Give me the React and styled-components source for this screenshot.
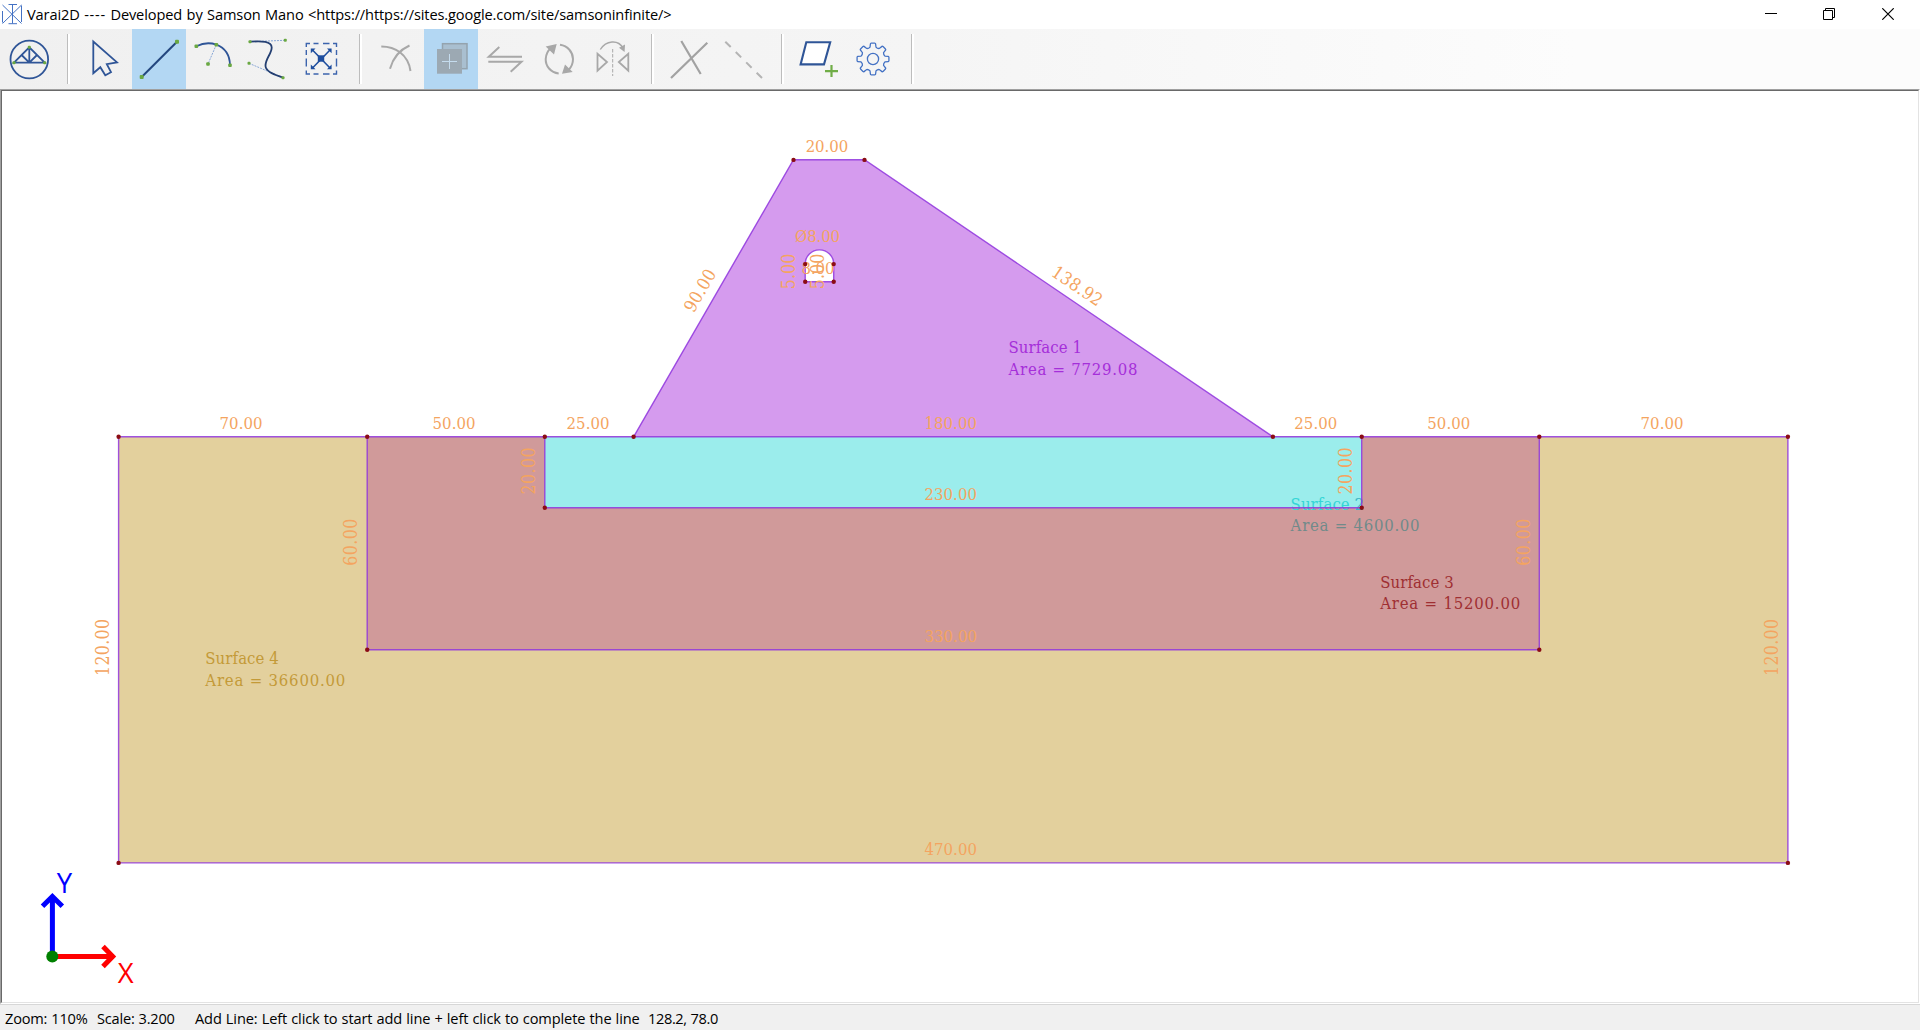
import React from "react";
import styled, { createGlobalStyle } from "styled-components";

const UI_FONT = '"Open Sans", "Noto Sans", sans-serif';
const DRAWING_FONT = '"DejaVu Serif Condensed", "DejaVu Serif", serif';

const GlobalStyle = createGlobalStyle`
  html, body { margin: 0; padding: 0; height: 100%; overflow: hidden; }
  * { box-sizing: border-box; }
`;

const Window = styled.div`
  display: flex;
  flex-direction: column;
  width: 100%;
  height: 100vh;
  background: #ffffff;
  color: #000000;
  font-family: ${UI_FONT};
  font-size: 14.6px;
`;

const TitleBar = styled.header`
  display: flex;
  align-items: center;
  flex: 0 0 29px;
  height: 29px;
  background: #ffffff;
`;

const Title = styled.h1`
  flex: 1;
  margin: 0 0 1px 5px;
  font-size: 14.6px;
  font-weight: 400;
  line-height: 28px;
  letter-spacing: -0.12px;
  word-spacing: 0.8px;
  white-space: pre;
`;

const Dashes = styled.span`
  letter-spacing: 0.75px;
`;

const AppIcon = styled.svg`
  width: 20px;
  height: 22px;
  margin-left: 2px;
`;

const WindowButton = styled.button`
  display: flex;
  align-items: center;
  justify-content: center;
  width: 58.5px;
  height: 29px;
  padding: 0 0 1px;
  border: 0;
  background: transparent;
`;

const WindowControls = styled.div`
  display: flex;
  width: 178.5px;
`;

const Toolbar = styled.nav`
  display: flex;
  align-items: stretch;
  flex: 0 0 60px;
  height: 60px;
  padding-left: 2px;
  background: linear-gradient(90deg, #f0f0f0 0, #f5f5f5 48%, #fcfcfc 82%, #fcfcfc 100%);
`;

const ToolButton = styled.button`
  flex: 0 0 54px;
  height: 60px;
  padding: 0;
  border: 0;
  background: ${(p) => (p.$active ? "#b3d7f3" : "transparent")};
`;

const ToolIcon = styled.svg`
  display: block;
  width: 54px;
  height: 60px;
  fill: none;
  stroke: ${(p) => (p.$muted ? "#a8a8a8" : "#2f5597")};
  stroke-width: 1.8;
`;

const Separator = styled.div`
  flex: 0 0 22px;
  padding: 5px 0 5px 11px;
  &::before {
    content: "";
    display: block;
    width: 2px;
    height: 50px;
    border-left: 1px solid #bdbdbd;
    background: #ffffff;
  }
`;

const Viewport = styled.main`
  flex: 1;
  min-height: 0;
  border-style: solid;
  border-width: 1px;
  border-color: #a0a0a0 #ffffff #ffffff #a0a0a0;
`;

const ViewportInner = styled.div`
  height: 100%;
  border-style: solid;
  border-width: 1px;
  border-color: #696969 #e3e3e3 #e3e3e3 #696969;
  background: #ffffff;
`;

const Drawing = styled.svg`
  display: block;
  width: 1916px;
  height: 911px;
`;

const Dimension = styled.text`
  font-family: ${DRAWING_FONT};
  font-size: ${(p) => (p.$turned ? 17.6 : 16.6)}px;
  fill: #f4a460;
  text-anchor: middle;
`;

const SurfaceLabel = styled.text`
  font-family: ${DRAWING_FONT};
  font-size: 16.6px;
  fill: ${(p) => p.$tone};
`;

const AxisName = styled.text`
  font-family: ${UI_FONT};
  font-size: 27.5px;
  text-anchor: middle;
  fill: ${(p) => p.$tone};
`;

const StatusBar = styled.footer`
  display: flex;
  align-items: center;
  flex: 0 0 26px;
  height: 26px;
  padding-left: 5px;
  border-top: 1px solid #d7d7d7;
  background: #f0f0f0;
`;

const StatusItem = styled.span`
  flex: 0 0 ${(p) => p.$width}px;
  line-height: 24px;
  padding-top: 1px;
  letter-spacing: ${(p) => p.$track}px;
  word-spacing: 0.45px;
  white-space: pre;
`;

const GREEN = "#70ad47";

const Node = ({ x, y, s = 3.6 }) => (
  <rect x={x - s / 2} y={y - s / 2} width={s} height={s} rx="1" fill="#6aa842" stroke="none" />
);

function gearPath(cx, cy) {
  const at = (r, deg) => {
    const a = (deg * Math.PI) / 180;
    return `${(cx + r * Math.cos(a)).toFixed(2)} ${(cy + r * Math.sin(a)).toFixed(2)}`;
  };
  let d = "";
  for (let i = 0; i < 8; i++) {
    const c = i * 45 - 90;
    d += `${i ? "L" : "M"}${at(12.3, c - 14)} L${at(15.5, c - 9.5)} Q${at(16, c - 9)} ${at(16, c - 6)} L${at(16, c + 6)} Q${at(16, c + 9)} ${at(15.5, c + 9.5)} L${at(12.3, c + 14)} Q${at(11.2, c + 22.5)} ${at(12.3, c + 31)} `;
  }
  return d + "Z";
}

const icons = {
  truss: (
    <>
      <circle cx="27.3" cy="30.5" r="18.8" />
      <path d="M12 33.7H42.7L27.3 18.3ZM27.3 18.3V33.7M27.3 33.7L19.6 26M27.3 33.7L35 26" />
      <Node x={27.3} y={18.3} s={3} />
      <Node x={12} y={33.7} s={3} />
      <Node x={42.7} y={33.7} s={3} />
    </>
  ),
  select: <path d="M15.3 12.6V44.2L22.3 38.2L27.3 46.2L33 43.2L28.8 35.2L39 33.4Z" />,
  line: (
    <>
      <path d="M9.7 48L45 12.7" stroke="#24477f" strokeWidth="2" />
      <Node x={9.7} y={48} s={4} />
      <Node x={45} y={12.7} s={4} />
    </>
  ),
  arc: (
    <>
      <path d="M30.3 15.7L22 35" strokeWidth="0.8" strokeDasharray="2 1" stroke="#6f94cf" />
      <path d="M10.3 17.3C17 14 24 13.4 30.3 15.7C39 19 43.8 26.5 44 36.3" />
      <Node x={10.3} y={17.3} />
      <Node x={30.3} y={15.7} />
      <Node x={44} y={36.3} />
      <Node x={22} y={35} />
    </>
  ),
  spline: (
    <>
      <path d="M10 12.7L45.3 11.3M9 34.3L43 48.7" strokeWidth="0.8" strokeDasharray="2 1" stroke="#6f94cf" />
      <path d="M10 12.7C22 12 31.5 12 31.7 18.5C31.8 25 25.5 29 25.5 37C26 43 35 45.5 43 48.7" stroke="#243f72" />
      <Node x={10} y={12.7} s={3} />
      <Node x={45.3} y={11.3} s={3} />
      <Node x={9} y={34.3} s={3} />
      <Node x={43} y={48.7} s={3} />
    </>
  ),
  fit: (
    <>
      <path
        d="M12.3 18V14.5H16M39 14.5H42.5V18M42.5 41.5V45H39M16 45H12.3V41.5M19.5 14.5H24.5M29 14.5H35.5M19.5 45H24.5M29 45H35.5M12.3 21V26M12.3 29.5V37.5M42.5 21V26M42.5 29.5V37.5"
        stroke="#3c64ad" strokeWidth="1.4"
      />
      <path d="M18 20.5L36.5 39.5M36.5 20.5L18 39.5" stroke="#1f4e9e" strokeWidth="1.6" />
      <rect x="23.8" y="26.3" width="6.4" height="6.4" fill="#1f4e9e" stroke="none" />
      <path
        d="M16.8 19.5H21.5L16.8 24.2ZM37.6 19.5H33L37.6 24.2ZM16.8 40.2H21.5L16.8 35.5ZM37.6 40.2H33L37.6 35.5Z"
        fill="#1f4e9e" stroke="none"
      />
    </>
  ),
  trim: (
    <path d="M11.3 17.5C18 17.5 24.5 19 30 23.3C36 28 39.5 34.5 40.5 42M39.5 16.5C29.5 21 23 29 20 39.7" strokeWidth="2" />
  ),
  copy: (
    <>
      <rect x="18.5" y="14.7" width="24.5" height="25" fill="#a9bfd0" stroke="#94a3ae" strokeWidth="1.5" />
      <rect x="13" y="20" width="25" height="24.7" fill="#9ca9b3" stroke="none" />
      <path d="M18 32.5H33M25.5 25V40" stroke="#c5dcee" strokeWidth="1" />
    </>
  ),
  swap: <path d="M21.3 18L10.8 27.7H44M10.3 32.7H43.5L32.7 42.8" strokeWidth="2" />,
  rotate: (
    <>
      <path d="M26.7 44.5C18.5 43.5 13.5 37 13.7 30C14 24.5 16 21.5 19 19M28 15.8C36 17 40.8 23 41 30C41 35 39.5 38 36.5 41" strokeWidth="2" />
      <path d="M13.7 17.5L24.7 15L22 25.5ZM30 44.7L40.7 43L33 35.5Z" fill="#a8a8a8" stroke="none" />
    </>
  ),
  mirror: (
    <>
      <path d="M11.5 24.8V41.6L21 33ZM42.3 24.8V41.6L32.8 33Z" />
      <path d="M26.7 20V47" strokeWidth="1" strokeDasharray="3.5 1.5" />
      <path d="M14.3 20.5C20 11.5 32 10 37 19" strokeWidth="1.4" />
      <path d="M33 18.8L39 15.5L38.6 23Z" fill="#a8a8a8" stroke="none" />
    </>
  ),
  intersect: <path d="M19.3 12L38.7 45M45.3 13.7L9 49" strokeWidth="2.2" stroke="#a2a2a2" />,
  dashed: <path d="M9.3 12.7L46 49" strokeWidth="2" strokeDasharray="7.6 7.1" stroke="#b4b4b4" />,
  surface: (
    <>
      <path d="M14.3 13.3H38.2L32 35.4H8.6Z" fill="#ffffff" strokeWidth="2.1" />
      <path d="M33 42.2H46M39.5 36V48" stroke={GREEN} strokeWidth="2.2" />
    </>
  ),
  settings: (
    <>
      <path d={gearPath(27, 30)} stroke="#4472c4" strokeWidth="1.3" />
      <circle cx="27" cy="30" r="5.6" stroke="#4472c4" strokeWidth="1.3" />
    </>
  ),
};

const toolGroups = [
  [["truss", "Model"]],
  [["select", "Select"], ["line", "Add line", { active: true }], ["arc", "Add arc"], ["spline", "Add spline"], ["fit", "Zoom to fit"]],
  [
    ["trim", "Trim", { muted: true }],
    ["copy", "Copy", { muted: true, active: true }],
    ["swap", "Move", { muted: true }],
    ["rotate", "Rotate", { muted: true }],
    ["mirror", "Mirror", { muted: true }],
  ],
  [["intersect", "Intersect", { muted: true }], ["dashed", "Split", { muted: true }]],
  [["surface", "Add surface"], ["settings", "Settings"]],
];

const X = [118.6, 367.2, 544.8, 633.6, 1272.9, 1361.7, 1539.3, 1787.9];
const GROUND = 436.8;
const Y20 = 507.8;
const Y60 = 649.8;
const Y120 = 862.9;

const nodes = [
  ...X.map((x) => [x, GROUND]),
  [X[2], Y20], [X[5], Y20], [X[1], Y60], [X[6], Y60], [X[0], Y120], [X[7], Y120],
  [793.5, 159.9], [864.5, 159.9],
  [805.2, 264.1], [833.7, 264.1], [805.2, 281.8], [833.7, 281.8],
];

const edges = [
  `M${X[0]} ${GROUND}H${X[7]}V${Y120}H${X[0]}Z`,
  `M${X[1]} ${GROUND}V${Y60}H${X[6]}V${GROUND}`,
  `M${X[2]} ${GROUND}V${Y20}H${X[5]}V${GROUND}`,
  `M${X[3]} ${GROUND}L793.5 159.7H864.5L${X[4]} ${GROUND}`,
  "M805.2 264.1V281.8H833.7V264.1A14.25 14.25 0 0 0 805.2 264.1",
];

const dimensions = [
  ["20.00", 826.9, 152, 0, 42.5],
  ["70.00", 241, 429, 0, 43],
  ["50.00", 454, 429, 0, 43],
  ["25.00", 588, 429, 0, 43],
  ["180.00", 950.7, 429, 0, 52.5],
  ["25.00", 1315.8, 429, 0, 43],
  ["50.00", 1448.8, 429, 0, 43],
  ["70.00", 1662, 429, 0, 43],
  ["230.00", 950.7, 500, 0, 52.5],
  ["330.00", 950.7, 642, 0, 52.5],
  ["470.00", 950.7, 855, 0, 52.5],
  ["Ø8.00", 817.6, 242, 0, 45],
  ["8.00", 818, 274, 0, 33],
  ["5.00", 795, 271.5, -90, 35.5],
  ["5.00", 823.7, 271.5, -90, 35.5],
  ["20.00", 535, 471, -90, 47],
  ["20.00", 1352, 471, -90, 47],
  ["60.00", 357.3, 542.2, -90, 47],
  ["60.00", 1530, 542.2, -90, 47],
  ["120.00", 108.5, 647.5, -90, 57],
  ["120.00", 1778, 647.5, -90, 57],
  ["90.00", 705.2, 293.5, -60, 46],
  ["138.92", 1073.8, 291, 34, 57],
];

const surfaces = [
  ["Surface 1", "Area = 7729.08", 1008.5, 353.3, 375, 129, "#a52fd9", "#a52fd9"],
  ["Surface 2", "Area = 4600.00", 1290.6, 510, 531, 129, "#35d6d6", "#718a8a", "#3cb6c4"],
  ["Surface 3", "Area = 15200.00", 1380.2, 588, 609, 140, "#9f2f32", "#9f2f32"],
  ["Surface 4", "Area = 36600.00", 205.3, 664, 686, 140, "#c39a38", "#c39a38"],
];

function Model() {
  return (
    <Drawing viewBox="2 91 1916 911">
      <path d={`M${X[0]} ${GROUND}H${X[7]}V${Y120}H${X[0]}Z`} fill="#e3d09d" />
      <path d={`M${X[1]} ${GROUND}H${X[6]}V${Y60}H${X[1]}Z`} fill="#d09a9a" />
      <path d={`M${X[2]} ${GROUND}H${X[5]}V${Y20}H${X[2]}Z`} fill="#9bedec" />
      <path
        d={`M${X[3]} ${GROUND}L793.5 159.7H864.5L${X[4]} ${GROUND}ZM805.2 264.1V281.8H833.7V264.1A14.25 14.25 0 0 0 805.2 264.1Z`}
        fill="#d59bee"
        fillRule="evenodd"
      />
      {surfaces.map(([name, area, x, y1, y2, w, tone, areaTone, digitTone]) => (
        <g key={name}>
          <SurfaceLabel $tone={tone} x={x} y={y1} textLength="73.5">
            {digitTone ? <>{name.slice(0, -1)}<tspan fill={digitTone}>{name.slice(-1)}</tspan></> : name}
          </SurfaceLabel>
          <SurfaceLabel $tone={areaTone} x={x} y={y2} textLength={w}>{area}</SurfaceLabel>
        </g>
      ))}
      {edges.map((d) => (
        <path key={d} d={d} fill="none" stroke="#8f35dd" strokeOpacity="0.85" strokeWidth="1.4" />
      ))}
      {dimensions.map(([text, x, y, angle, w], i) => (
        <Dimension key={i} $turned={angle !== 0} x={x} y={y} textLength={w} transform={angle ? `rotate(${angle} ${x} ${y})` : undefined}>
          {text}
        </Dimension>
      ))}
      {nodes.map(([x, y], i) => (
        <circle key={i} cx={x} cy={y} r="2.2" fill="#8b0c14" />
      ))}
      <path d="M52.4 956V896M42.5 906.3L52.4 896.5L62.3 906.3" stroke="#0000ff" strokeWidth="5" fill="none" />
      <path d="M52.4 956.5H112M103 946.6L112.7 956.5L103 966.4" stroke="#ff0000" strokeWidth="5" fill="none" />
      <circle cx="52.3" cy="956.6" r="6" fill="#008000" />
      <AxisName $tone="#0000ff" x="64.5" y="892.7">Y</AxisName>
      <AxisName $tone="#ff0000" x="125.6" y="983">X</AxisName>
    </Drawing>
  );
}

export default function App() {
  return (
    <>
      <GlobalStyle />
      <Window>
        <TitleBar>
          <AppIcon viewBox="2 4 20 22" fill="none" stroke="#4472c4" strokeWidth="1">
            <path d="M2.5 5L21.5 23.5M21.5 5L2.5 23.5M8.5 4.5H17M8.5 23.7H17M12.5 4.5V23.5M2.5 11V22.5M21.5 5.5V22" />
          </AppIcon>
          <Title>
            {"Varai2D "}<Dashes>----</Dashes>{" Developed by Samson Mano <https://https://sites.google.com/site/samsoninfinite/>"}
          </Title>
          <WindowControls>
            <WindowButton aria-label="Minimize">
              <svg width="12" height="12" stroke="#000"><path d="M0 5.5H12" /></svg>
            </WindowButton>
            <WindowButton aria-label="Restore">
              <svg width="12" height="12" fill="none" stroke="#000"><path d="M0.5 2.5H9.5V11.5H0.5ZM2.5 2.5V0.5H11.5V9.5H9.5" /></svg>
            </WindowButton>
            <WindowButton aria-label="Close">
              <svg width="12" height="12" stroke="#000" strokeWidth="1.2"><path d="M0.3 0.3L11.7 11.7M11.7 0.3L0.3 11.7" /></svg>
            </WindowButton>
          </WindowControls>
        </TitleBar>
        <Toolbar>
          {toolGroups.map((group, g) => (
            <React.Fragment key={g}>
              {group.map(([id, label, state = {}]) => (
                <ToolButton key={id} aria-label={label} $active={state.active}>
                  <ToolIcon viewBox="0 0 54 60" $muted={state.muted}>{icons[id]}</ToolIcon>
                </ToolButton>
              ))}
              <Separator />
            </React.Fragment>
          ))}
        </Toolbar>
        <Viewport>
          <ViewportInner>
            <Model />
          </ViewportInner>
        </Viewport>
        <StatusBar>
          <StatusItem $width={92} $track={-0.2}>Zoom: 110%</StatusItem>
          <StatusItem $width={98} $track={-0.22}>Scale: 3.200</StatusItem>
          <StatusItem $width={453} $track={-0.12}>Add Line: Left click to start add line + left click to complete the line</StatusItem>
          <StatusItem $width={80} $track={-0.38}>128.2, 78.0</StatusItem>
        </StatusBar>
      </Window>
    </>
  );
}
